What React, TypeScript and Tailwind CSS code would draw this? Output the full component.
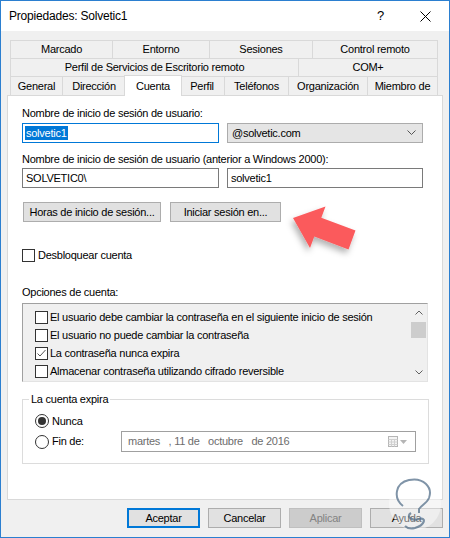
import React from "react";

const Chk = ({ checked = false }: { checked?: boolean }) => (
  <span className="w-[13px] h-[13px] border border-[#333333] bg-white flex items-center justify-center shrink-0">
    {checked && (
      <svg width="11" height="11" viewBox="0 0 11 11">
        <path d="M1.5 5.5 L4 8 L9.5 2" stroke="#555" strokeWidth="1" fill="none" />
      </svg>
    )}
  </span>
);

const Radio = ({ checked = false }: { checked?: boolean }) => (
  <span className="w-[14px] h-[14px] rounded-full border border-[#333333] bg-white flex items-center justify-center shrink-0">
    {checked && <span className="w-[8px] h-[8px] rounded-full bg-[#333333]" />}
  </span>
);

const Tab = ({ w, children, first = false }: { w: string; children: React.ReactNode; first?: boolean }) => (
  <div
    className={`${w} h-full border-t border-r border-[#d9d9d9] ${first ? "border-l" : ""} bg-[#f0f0f0] flex items-center justify-center whitespace-nowrap`}
  >
    {children}
  </div>
);

const Btn = ({ w, children, cls = "" }: { w: string; children: React.ReactNode; cls?: string }) => (
  <div className={`${w} h-[20px] flex items-center justify-center border ${cls || "border-[#adadad] bg-[#e1e1e1]"} whitespace-nowrap`}>
    {children}
  </div>
);

export default function App() {
  return (
    <div
      className="relative w-[450px] h-[538px] border border-[#2b7fd0] bg-[#f0f0f0] flex flex-col text-[11px] tracking-[-0.25px] text-black overflow-hidden"
      style={{ fontFamily: '"Liberation Sans", Arial, sans-serif' }}
    >
      {/* Title bar */}
      <div className="h-[30px] bg-white flex items-center justify-between pl-[8px] shrink-0">
        <span className="text-[12px] tracking-[-0.2px] text-black">Propiedades: Solvetic1</span>
        <div className="flex items-center h-full">
          <span className="text-[13px] mr-[36px]">?</span>
          <svg width="11" height="11" viewBox="0 0 11 11" className="mr-[18px]">
            <path d="M0.5 0.5 L10.5 10.5 M10.5 0.5 L0.5 10.5" stroke="#000" strokeWidth="1" />
          </svg>
        </div>
      </div>

      <div className="flex flex-col px-[6px] pt-[9px]">
        {/* Tabs */}
        <div className="flex flex-col px-[3px]">
          <div className="flex h-[18px]">
            <Tab w="w-[103px]" first>Marcado</Tab>
            <Tab w="w-[97px]">Entorno</Tab>
            <Tab w="w-[103px]">Sesiones</Tab>
            <Tab w="w-[125px]">Control remoto</Tab>
          </div>
          <div className="flex h-[18px]">
            <Tab w="w-[289px]" first>Perfil de Servicios de Escritorio remoto</Tab>
            <Tab w="w-[139px]">COM+</Tab>
          </div>
          <div className="flex h-[19px] items-end">
            <Tab w="w-[53px]" first>General</Tab>
            <Tab w="w-[63px]">Dirección</Tab>
            <div className="relative z-10 w-[58px] h-[21px] -mx-[2px] -mb-[1px] bg-white border-t border-l border-r border-[#d9d9d9] flex justify-center pt-[2px]">
              Cuenta
            </div>
            <Tab w="w-[45px]">Perfil</Tab>
            <Tab w="w-[64px]">Teléfonos</Tab>
            <Tab w="w-[79px]">Organización</Tab>
            <Tab w="w-[70px]">Miembro de</Tab>
          </div>
        </div>

        {/* Panel */}
        <div className="h-[405px] border border-[#d9d9d9] bg-white px-[14px] flex flex-col">
          <div className="mt-[10px] leading-[15px] h-[15px]">Nombre de inicio de sesión de usuario:</div>
          <div className="mt-[2px] flex gap-[8px] h-[20px]">
            <div className="w-[197px] h-full border border-[#0078d7] bg-white flex items-center pl-[2px]">
              <span className="bg-[#0078d7] text-white leading-[14px] px-[1px]">solvetic1</span>
            </div>
            <div className="w-[196px] h-full border border-[#acacac] bg-[#e5e5e5] flex items-center justify-between pl-[4px] pr-[6px]">
              <span>@solvetic.com</span>
              <svg width="9" height="6" viewBox="0 0 9 6">
                <path d="M0.5 0.5 L4.5 4.5 L8.5 0.5" stroke="#555" strokeWidth="1" fill="none" />
              </svg>
            </div>
          </div>
          <div className="mt-[9px] leading-[15px] h-[15px]">
            Nombre de inicio de sesión de usuario (anterior a Windows 2000):
          </div>
          <div className="mt-[1px] flex gap-[8px] h-[20px]">
            <div className="w-[197px] h-full border border-[#7a7a7a] bg-white flex items-center pl-[3px]">SOLVETIC0\</div>
            <div className="w-[196px] h-full border border-[#7a7a7a] bg-white flex items-center pl-[3px]">solvetic1</div>
          </div>
          <div className="mt-[14px] flex gap-[9px] pl-[1px]">
            <Btn w="w-[138px]">Horas de inicio de sesión...</Btn>
            <Btn w="w-[111px]">Iniciar sesión en...</Btn>
          </div>
          <div className="mt-[26px] flex items-center gap-[3px] h-[15px]">
            <Chk />
            <span>Desbloquear cuenta</span>
          </div>
          <div className="mt-[22px] leading-[15px] h-[15px]">Opciones de cuenta:</div>
          <div className="mt-[3px] h-[79px] w-[406px] border border-t-[#a0a0a0] border-l-[#a0a0a0] border-r-[#e3e3e3] border-b-[#e3e3e3] bg-[#f0f0f0] flex">
            <div className="flex-1 flex flex-col pl-[12px] pt-[4px]">
              {[
                ["El usuario debe cambiar la contraseña en el siguiente inicio de sesión", false],
                ["El usuario no puede cambiar la contraseña", false],
                ["La contraseña nunca expira", true],
                ["Almacenar contraseña utilizando cifrado reversible", false],
              ].map(([t, c], i) => (
                <div key={i} className="flex items-center gap-[2px] h-[18px]">
                  <Chk checked={c as boolean} />
                  <span>{t as string}</span>
                </div>
              ))}
            </div>
            <div className="w-[17px] flex flex-col items-center">
              <div className="h-[17px] flex items-center justify-center">
                <svg width="8" height="5" viewBox="0 0 8 5">
                  <path d="M0.5 4.5 L4 1 L7.5 4.5" stroke="#606060" strokeWidth="1" fill="none" />
                </svg>
              </div>
              <div className="w-[15px] h-[16px] bg-[#cdcdcd] mt-[1px]" />
              <div className="flex-1" />
              <div className="h-[17px] flex items-center justify-center">
                <svg width="8" height="5" viewBox="0 0 8 5">
                  <path d="M0.5 0.5 L4 4 L7.5 0.5" stroke="#606060" strokeWidth="1" fill="none" />
                </svg>
              </div>
            </div>
          </div>

          {/* Group box */}
          <div className="mt-[10px] w-[407px] flex flex-col">
            <div className="flex h-[15px]">
              <div className="w-[7px] mt-[7px] border-t border-l border-[#dcdcdc]" />
              <span className="px-[2px] leading-[15px]">La cuenta expira</span>
              <div className="flex-1 mt-[7px] border-t border-r border-[#dcdcdc]" />
            </div>
            <div className="h-[57px] border-l border-r border-b border-[#dcdcdc] px-[12px] flex flex-col">
              <div className="flex items-center gap-[3px] h-[16px] mt-[6px]">
                <Radio checked />
                <span>Nunca</span>
              </div>
              <div className="flex items-center h-[21px] mt-[2px]">
                <div className="flex items-center gap-[3px] w-[86px]">
                  <Radio />
                  <span>Fin de:</span>
                </div>
                <div className="w-[295px] h-[21px] border border-[#a0a0a0] bg-white flex items-center justify-between pl-[6px] pr-[8px] text-[#6d6d6d]">
                  <span className="whitespace-pre">martes   , 11 de   octubre   de 2016</span>
                  <div className="flex items-center gap-[2px]">
                    <svg width="10" height="11" viewBox="0 0 10 11">
                      <rect x="0.5" y="0.5" width="9" height="10" fill="#f4f4f4" stroke="#b5b5b5" />
                      <path d="M0.5 3.5 H9.5 M0.5 6 H9.5 M0.5 8.5 H9.5 M3.5 3.5 V10.5 M6.5 3.5 V10.5" stroke="#d0d0d0" />
                    </svg>
                    <svg width="7" height="4" viewBox="0 0 7 4">
                      <path d="M0 0 L7 0 L3.5 4 Z" fill="#b5b5b5" />
                    </svg>
                  </div>
                </div>
              </div>
            </div>
          </div>
        </div>

        {/* Buttons */}
        <div className="mt-[8px] flex justify-end gap-[8px]">
          <Btn w="w-[73px]" cls="border-2 border-[#0078d7] bg-[#e1e1e1]">Aceptar</Btn>
          <Btn w="w-[73px]">Cancelar</Btn>
          <Btn w="w-[73px]" cls="border-[#bfbfbf] bg-[#cccccc] text-[#838383]">Aplicar</Btn>
          <Btn w="w-[73px]">Ayuda</Btn>
        </div>
      </div>

      {/* Red arrow annotation and watermark overlay */}
      <svg className="absolute left-0 top-0 pointer-events-none" width="450" height="538" viewBox="0 0 450 538">
        <defs>
          <filter id="sh" x="-30%" y="-30%" width="160%" height="160%">
            <feDropShadow dx="-2" dy="4" stdDeviation="3" floodColor="#000" floodOpacity="0.3" />
          </filter>
        </defs>
        <polygon
          points="292,217 324.5,205.5 320.3,216.8 354.5,229.6 347.5,248.4 313.3,235.6 309,247"
          fill="#fb5a5c"
          filter="url(#sh)"
        />
        <g opacity="0.85">
          <circle cx="414" cy="503" r="26" fill="#ffffff" opacity="0.5" />
          <path
            d="M402 505 C392 497 394 482 408 479 C422 476 432 486 428 497 C426 502 421 504 418 508 L418 512"
            stroke="#6a8299"
            strokeWidth="2"
            fill="none"
          />
          <path d="M410 512 C404 516 412 520 418 518 C426 516 424 524 414 527 C410 528 406 527 404 525" stroke="#6a8299" strokeWidth="2.2" fill="none" />
        </g>
      </svg>
    </div>
  );
}
